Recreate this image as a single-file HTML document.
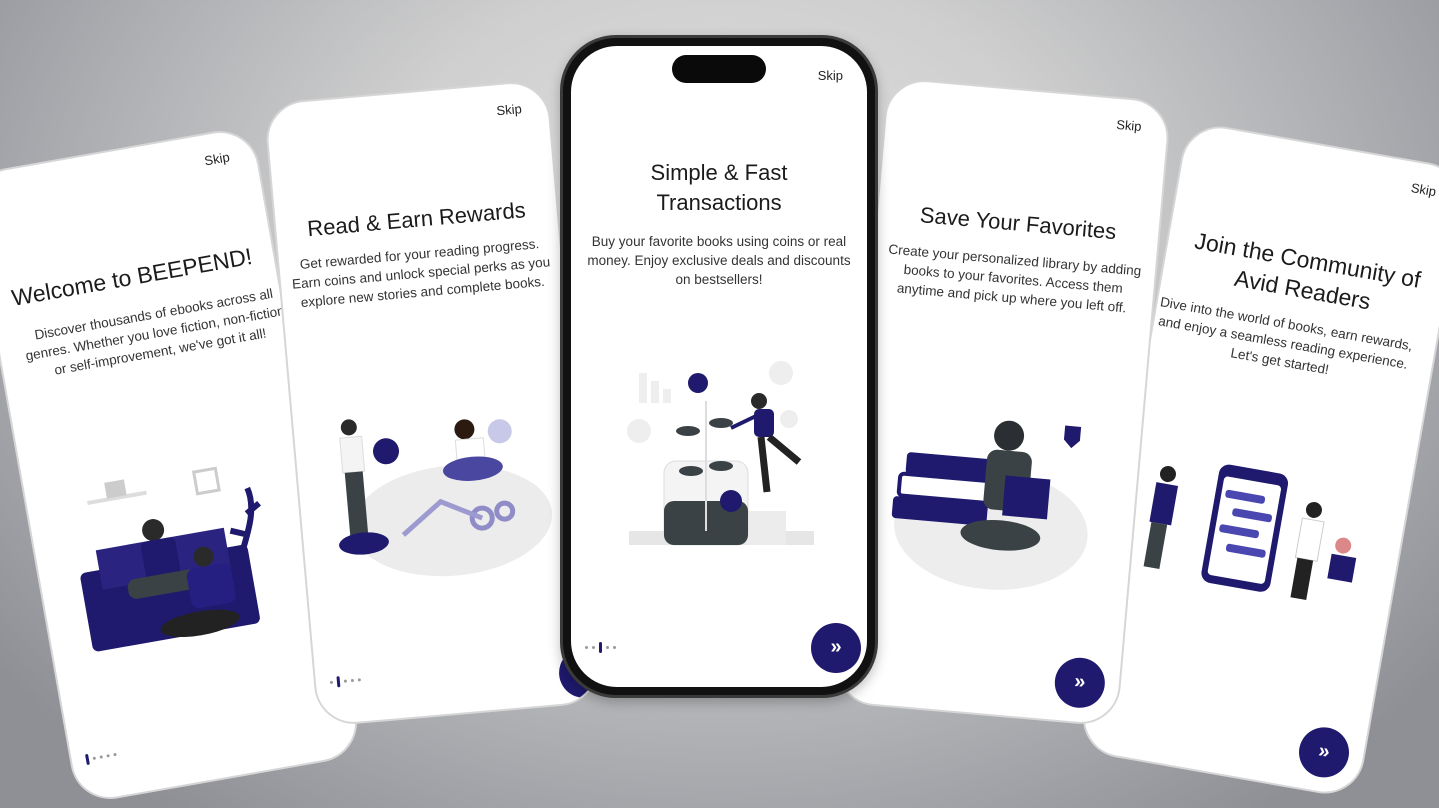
<!DOCTYPE html>
<html><head><meta charset="utf-8"><style>
*{margin:0;padding:0;box-sizing:border-box}
body{width:1439px;height:808px;overflow:hidden;position:relative;font-family:"Liberation Sans",sans-serif;
background:radial-gradient(ellipse 900px 700px at 720px 250px,#e2e2e2 0%,#cfcfcf 40%,#a9abaf 75%,#8e9096 100%);}
.card{position:absolute;background:#fff;border-radius:40px;border:2px solid #d6d6d6;overflow:hidden;color:#1b1b1b}
.skip{position:absolute;right:26px;top:18px;font-size:13px;color:#222}
.t{position:absolute;left:-20px;right:-20px;text-align:center;font-size:22px;line-height:30px;color:#1b1b1b;white-space:nowrap}
.b{position:absolute;left:-20px;right:-20px;text-align:center;font-size:13.5px;line-height:19px;color:#333;white-space:nowrap}
.dots{position:absolute;left:14px;bottom:36px;display:flex;align-items:center;gap:4px}
.dots i{display:block;width:3px;height:3px;border-radius:50%;background:#999}
.dots i.a{width:3px;height:11px;border-radius:2px;background:#1f1a6e}
.btn{position:absolute;right:14px;bottom:14px;width:50px;height:50px;border-radius:50%;background:#1f1a6e;color:#fff;font-size:20px;text-align:center;line-height:48px;font-weight:bold}
.ill{position:absolute;left:0;right:0}
</style></head><body>

<!-- card 1 -->
<div class="card" style="left:20px;top:145px;width:290px;height:640px;transform:rotate(-10deg)">
  <div class="skip">Skip</div>
  <div class="t" style="top:112px;font-size:23px">Welcome to BEEPEND!</div>
  <div class="b" style="top:158px;left:-10px;right:-40px">Discover thousands of ebooks across all<br>genres. Whether you love fiction, non-fiction,<br>or self-improvement, we've got it all!</div>
  <svg class="ill" style="top:320px" width="290" height="200" viewBox="0 0 290 200">
    <rect x="60" y="20" width="60" height="4" fill="#ddd"/><rect x="80" y="5" width="20" height="16" fill="#ccc"/>
    <rect x="170" y="10" width="22" height="22" fill="none" stroke="#ccc" stroke-width="3"/>
    <rect x="40" y="90" width="170" height="80" rx="6" fill="#1f1a6e"/>
    <rect x="60" y="70" width="130" height="40" fill="#2a2480"/>
    <circle cx="120" cy="60" r="11" fill="#2a2a2a"/><rect x="105" y="70" width="35" height="45" rx="6" fill="#1f1a6e"/>
    <rect x="85" y="105" width="70" height="20" rx="8" fill="#3a4245"/>
    <circle cx="165" cy="95" r="10" fill="#2a2a2a"/><rect x="145" y="105" width="45" height="40" rx="8" fill="#241f80"/>
    <ellipse cx="150" cy="160" rx="40" ry="12" fill="#222"/>
    <path d="M205 95c10-20 20-40 15-60M215 60l14-8M210 80l-14-6" stroke="#1f1a6e" stroke-width="6" fill="none"/>
  </svg>
  <div class="dots"><i class="a"></i><i></i><i></i><i></i><i></i></div>
</div>

<!-- card 2 -->
<div class="card" style="left:290px;top:90px;width:285px;height:626px;transform:rotate(-5deg)">
  <div class="skip">Skip</div>
  <div class="t" style="top:112px">Read &amp; Earn Rewards</div>
  <div class="b" style="top:152px">Get rewarded for your reading progress.<br>Earn coins and unlock special perks as you<br>explore new stories and complete books.</div>
  <svg class="ill" style="top:300px" width="285" height="200" viewBox="0 0 285 200">
    <ellipse cx="150" cy="130" rx="100" ry="55" fill="#ececec"/>
    <circle cx="55" cy="28" r="8" fill="#2a2a2a"/><rect x="45" y="38" width="22" height="35" fill="#f4f4f4" stroke="#ddd"/>
    <rect x="47" y="73" width="18" height="65" fill="#3a4245"/>
    <circle cx="90" cy="55" r="13" fill="#1f1a6e"/>
    <ellipse cx="60" cy="145" rx="25" ry="11" fill="#1f1a6e"/>
    <circle cx="170" cy="40" r="10" fill="#2a1a10"/><rect x="160" y="50" width="28" height="30" fill="#fff" stroke="#ddd"/>
    <ellipse cx="175" cy="80" rx="30" ry="12" fill="#4a47a0"/>
    <circle cx="205" cy="45" r="12" fill="#c8c8e8"/>
    <circle cx="180" cy="130" r="10" fill="none" stroke="#8f8cc8" stroke-width="5"/><circle cx="203" cy="125" r="8" fill="none" stroke="#8f8cc8" stroke-width="5"/>
    <path d="M100 140l40-30 40 20" stroke="#9d9ad0" stroke-width="5" fill="none"/>
  </svg>
  <div class="dots"><i></i><i class="a"></i><i></i><i></i><i></i></div>
  <div class="btn" style="right:-12px;bottom:4px">»</div>
</div>

<!-- card 5 -->
<div class="card" style="left:1130px;top:140px;width:285px;height:640px;transform:rotate(10deg)">
  <div class="skip">Skip</div>
  <div class="t" style="top:100px;font-size:23px">Join the Community of<br>Avid Readers</div>
  <div class="b" style="top:172px;left:-30px;right:-10px">Dive into the world of books, earn rewards,<br>and enjoy a seamless reading experience.<br>Let's get started!</div>
  <svg class="ill" style="top:320px" width="285" height="160" viewBox="0 0 285 160">
    <rect x="90" y="10" width="70" height="120" rx="10" fill="#1f1a6e"/>
    <rect x="96" y="22" width="58" height="100" rx="4" fill="#fff"/>
    <rect x="100" y="35" width="40" height="8" rx="3" fill="#4a47b0"/><rect x="110" y="52" width="40" height="8" rx="3" fill="#4a47b0"/>
    <rect x="100" y="70" width="40" height="8" rx="3" fill="#4a47b0"/><rect x="110" y="88" width="40" height="8" rx="3" fill="#4a47b0"/>
    <circle cx="40" cy="30" r="8" fill="#222"/><rect x="30" y="40" width="22" height="40" fill="#1f1a6e"/><rect x="32" y="80" width="16" height="45" fill="#3a4245"/>
    <circle cx="190" cy="40" r="8" fill="#222"/><rect x="180" y="50" width="22" height="40" fill="#fff" stroke="#ccc"/><rect x="182" y="90" width="16" height="40" fill="#222"/>
    <circle cx="225" cy="70" r="8" fill="#d88"/><rect x="215" y="80" width="25" height="25" fill="#1f1a6e"/>
  </svg>
  <div class="btn">»</div>
</div>

<!-- card 4 -->
<div class="card" style="left:860px;top:88px;width:285px;height:628px;transform:rotate(5deg)">
  <div class="skip">Skip</div>
  <div class="t" style="top:118px">Save Your Favorites</div>
  <div class="b" style="top:160px">Create your personalized library by adding<br>books to your favorites. Access them<br>anytime and pick up where you left off.</div>
  <svg class="ill" style="top:320px" width="285" height="180" viewBox="0 0 285 180">
    <ellipse cx="140" cy="120" rx="97" ry="60" fill="#ededed"/>
    <rect x="40" y="95" width="95" height="22" rx="4" fill="#1f1a6e"/>
    <rect x="45" y="72" width="90" height="22" rx="4" fill="#fff" stroke="#1f1a6e" stroke-width="4"/>
    <rect x="50" y="50" width="85" height="22" rx="4" fill="#1f1a6e"/>
    <circle cx="150" cy="25" r="15" fill="#2b2f33"/><rect x="130" y="40" width="45" height="60" rx="10" fill="#3a4245"/>
    <rect x="150" y="65" width="45" height="40" fill="#1f1a6e"/>
    <ellipse cx="150" cy="125" rx="40" ry="15" fill="#3a4245"/>
    <path d="M205 10h16v14l-8 8-8-8z" fill="#1f1a6e"/>
  </svg>
  <div class="btn">»</div>
</div>

<!-- phone -->
<div style="position:absolute;left:560px;top:35px;width:318px;height:663px;border-radius:56px;background:#111;border:3px solid #3a3a3a;box-shadow:0 4px 12px rgba(0,0,0,.25)">
  <div style="position:absolute;left:8px;top:8px;right:8px;bottom:8px;border-radius:46px;background:#fff;overflow:hidden;color:#1b1b1b">
    <div style="position:absolute;left:101px;top:9px;width:94px;height:28px;border-radius:14px;background:#0a0a0a"></div>
    <div class="skip" style="right:24px;top:22px">Skip</div>
    <div class="t" style="top:112px">Simple &amp; Fast<br>Transactions</div>
    <div class="b" style="top:186px">Buy your favorite books using coins or real<br>money. Enjoy exclusive deals and discounts<br>on bestsellers!</div>
    <svg class="ill" style="top:315px" width="300" height="190" viewBox="0 0 300 190">
      <rect x="68" y="12" width="8" height="30" fill="#eee"/><rect x="80" y="20" width="8" height="22" fill="#eee"/><rect x="92" y="28" width="8" height="14" fill="#eee"/>
      <circle cx="68" cy="70" r="12" fill="#eee"/><circle cx="210" cy="12" r="12" fill="#eee"/><circle cx="218" cy="58" r="9" fill="#eee"/>
      <rect x="58" y="170" width="185" height="14" fill="#e6e6e6"/>
      <rect x="175" y="150" width="40" height="34" fill="#ececec"/>
      <rect x="93" y="100" width="84" height="84" rx="12" fill="#f4f4f4" stroke="#ddd"/>
      <rect x="93" y="140" width="84" height="44" rx="10" fill="#3a4245"/>
      <path d="M135 170V40" stroke="#ddd" stroke-width="2"/>
      <circle cx="127" cy="22" r="10" fill="#1f1a6e"/>
      <ellipse cx="117" cy="70" rx="12" ry="5" fill="#3a4245"/><ellipse cx="150" cy="62" rx="12" ry="5" fill="#3a4245"/>
      <ellipse cx="120" cy="110" rx="12" ry="5" fill="#3a4245"/><ellipse cx="150" cy="105" rx="12" ry="5" fill="#3a4245"/>
      <circle cx="160" cy="140" r="11" fill="#1f1a6e"/>
      <circle cx="188" cy="40" r="8" fill="#2a2a2a"/>
      <rect x="183" y="48" width="20" height="28" rx="5" fill="#1f1a6e"/>
      <path d="M190 76l6 55M198 76l30 25" stroke="#222" stroke-width="7"/>
      <path d="M185 55l-25 12" stroke="#1f1a6e" stroke-width="4"/>
    </svg>
    <div class="dots" style="left:14px;bottom:34px"><i></i><i></i><i class="a"></i><i></i><i></i></div>
    <div class="btn" style="right:6px;bottom:14px">»</div>
  </div>
</div>
</body></html>
